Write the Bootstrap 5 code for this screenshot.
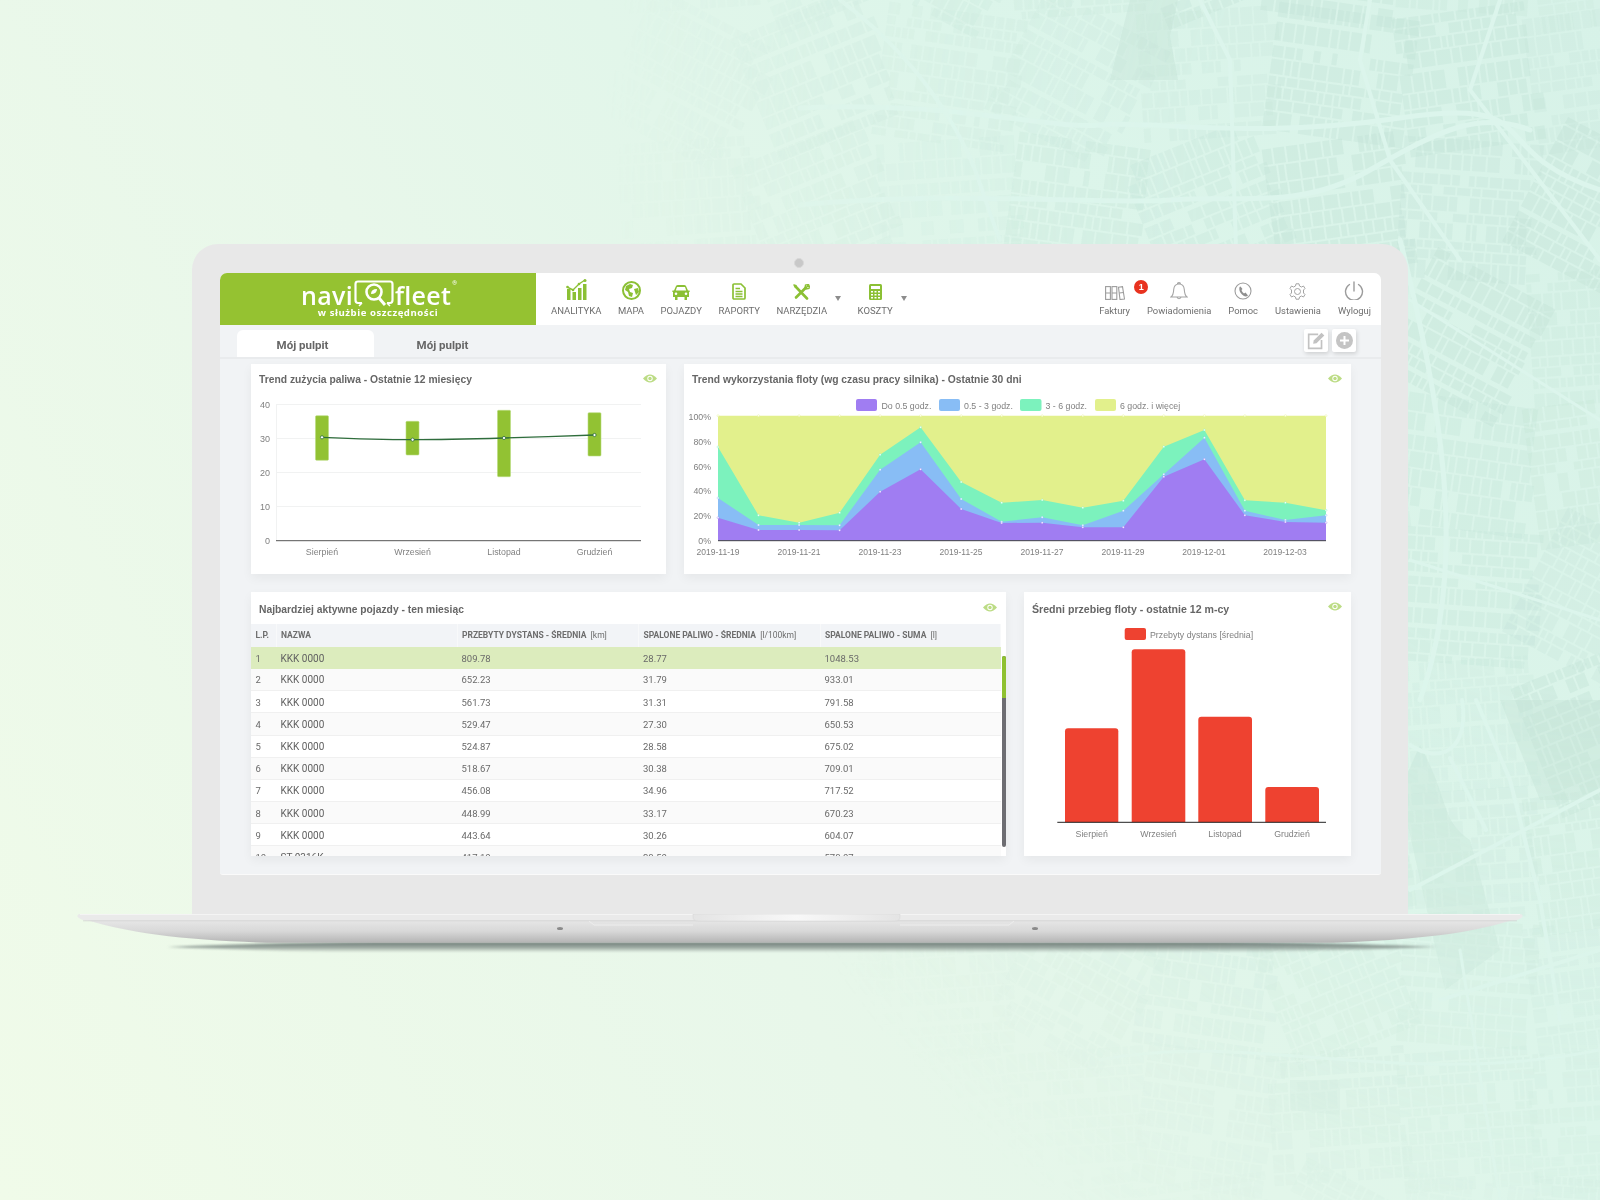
<!DOCTYPE html>
<html lang="pl">
<head>
<meta charset="utf-8">
<title>Navifleet</title>
<link href="https://cdn.jsdelivr.net/npm/bootstrap@5.3.0/dist/css/bootstrap.min.css" rel="stylesheet">
<style>
html,body{margin:0;height:1200px;overflow:hidden}
body{background:linear-gradient(60deg,#f0fbe9 0%,#e8f7ea 40%,#dcf5ea 72%,#d7f2e8 100%);font-family:Roboto,"Liberation Sans",sans-serif;color:#666;position:relative}
.map-bg{position:absolute;inset:0;width:1600px;height:1200px;-webkit-mask-image:radial-gradient(ellipse 1000px 1200px at 1600px 200px,#000 40%,rgba(0,0,0,.5) 75%,transparent 100%);mask-image:radial-gradient(ellipse 1000px 1200px at 1600px 200px,#000 40%,rgba(0,0,0,.5) 75%,transparent 100%)}
.stage{position:relative;padding-top:244px;filter:blur(.4px)}
.lid{margin-left:192px;width:1216px;height:670px;background:#e8e8e8;border-radius:26px 26px 0 0;padding:28.5px 27px 0 28px;position:relative}
.cam{position:absolute;left:602px;top:14px;width:10px;height:10px;border-radius:50%;background:#c8c8c8;border:1px solid #d8d8d8}
.scr{height:602px;background:#f1f3f5;border-radius:7px 7px 3px 3px;overflow:hidden;border-bottom:1px solid #fafafa}
.topb{height:52px;background:#fff}
.logo{width:316px;background:#95c231;color:#fff;flex:none;position:relative}
.logo-main{height:34px;padding-top:8px;gap:1px;padding-left:2px}
.logo-word{font:600 25px/22px "Open Sans",sans-serif;letter-spacing:.3px;height:22px;margin-top:3px}
.logo-r{font-size:6px;line-height:6px;align-self:flex-start;margin-top:-1px}
.logo-sub{font:700 9.6px/11px "Open Sans",sans-serif;letter-spacing:.55px}
.navs{gap:16.5px;padding-left:15px}
.navr{gap:17px;padding-right:10px}
.nitem{display:flex;flex-direction:column;align-items:center;font-size:9.5px;line-height:12px;color:#6e6e6e;white-space:nowrap;position:relative}
.navr .nitem{font-size:9.4px}
.ico{height:32px;display:flex;align-items:flex-end;justify-content:center;padding-bottom:5px}
.caret-d{width:0;height:0;border-left:3.5px solid transparent;border-right:3.5px solid transparent;border-top:5px solid #8d8d8d;margin:23px 0 0 -8.500px}
.bdg{position:absolute;left:35px;top:7px;width:14px;height:14px;border-radius:50%;background:#e8321f;color:#fff;font:700 9px/14px "Liberation Sans",sans-serif;text-align:center}
.tabsb{height:34px;border-bottom:2px solid #e9ebed;padding:5px 25px 0 17px}
.tabi{width:137px;height:27px;font-weight:700;font-size:11.5px;line-height:31px;text-align:center;color:#666;border-radius:6px 6px 0 0}
.tabi-on{background:#fff;padding-right:6px}
.tool{width:24px;height:23px;background:#fff;box-shadow:1px 2px 4px rgba(0,0,0,.14);border-radius:2px}
.tools{gap:4px;margin-top:-1px}
.dash{padding:5px 30px 0 31px;gap:18px}
.dcard{box-shadow:0 4px 10px rgba(0,0,0,.05);background:#fff;border:0;border-radius:0;overflow:hidden;position:relative}
.c1{width:415px;height:210px}
.c2{flex:1;height:210px}
.c3{width:755px;height:264px}
.c4{flex:1;height:264px}
.rowg{gap:18px}
.chead{height:30px;padding:0 9px 0 8px;flex:none}
.chead-t{height:32px}
.ctitle{font:700 10.3px/28px "Liberation Sans",sans-serif;color:#666;margin:0;padding-top:3px}
.chead-t .ctitle{padding-top:4px}
.c4 .ctitle{font-size:10.6px;padding-top:4px}
.eye{margin-top:-1px}
svg text{font-family:"Liberation Sans",sans-serif;fill:#808080}
.chart{display:block}
.twrap{height:232px;overflow:hidden;position:relative}
.tb{width:750px;margin:0;table-layout:fixed;font-size:9.5px;color:#6a6a6a;--bs-table-bg:transparent;--bs-table-striped-bg:transparent;--bs-table-color:#6a6a6a;--bs-table-striped-color:#6a6a6a}
.tb th{height:23px;background:#f2f4f7;font-size:8.5px;font-weight:700;padding:0 0 0 4.5px;border:0;border-right:1px solid #f8f9fa;vertical-align:middle;color:#6d6d6d;white-space:nowrap}
.tb th span{font-weight:400;margin-left:2px}
.tb td{height:22.15px;padding:2px 0 0 4.5px;border-bottom:1px solid #f0f0f0;vertical-align:middle;line-height:12px}
.tb tbody tr:nth-of-type(even) td{background:#fafafa}
.tb td.nm{font-size:10px;color:#606060}
.tb tr.hl td{background:#dcecbd;border-bottom:0}
.scb{position:absolute;right:0;top:32px;width:4.5px;height:191px;background:#6d6d72;border-radius:3px;overflow:hidden}
.scb-on{height:42px;background:#8fc130}
.baseb{margin-left:77px}
</style>
</head>
<body>
<svg class="map-bg" id="mapbg" viewBox="0 0 1600 1200" aria-hidden="true"></svg>
<div class="stage">
  <div class="lid">
    <div class="cam"></div>
    <div class="scr">
      <div class="topb d-flex">
        <div class="logo d-flex flex-column align-items-center">
          <div class="logo-main d-flex align-items-center">
            <span class="logo-word">navi</span>
            <svg width="40" height="27" viewBox="0 0 40 27" fill="none" stroke="#fff"><path d="M8 23H4Q1.5 23 1.5 20V4Q1.5 1.5 4 1.5H36Q38.500 1.500 38.500 4V20Q38.500 23 36 23H33" stroke-width="2.200"/><path d="M8 23 5 26M33 23 36 26" stroke-width="1.500"/><circle cx="20" cy="12" r="7.500" stroke-width="2.600"/><path d="M25 18 31 25" stroke-width="3"/><path d="M17 14Q17 9 23 9Q23 14 17 14Z" fill="#fff" stroke="none"/></svg>
            <span class="logo-word">fleet</span>
            <span class="logo-r">®</span>
          </div>
          <div class="logo-sub">w służbie oszczędności</div>
        </div>
        <div class="navs d-flex">
          <div class="nitem"><div class="ico"><svg width="21" height="21" viewBox="0 0 21 21" fill="#8bc034"><path d="M1 10h3.500v11H1zM6.500 13H10v8H6.500zM12 9h3.500v12H12zM17 5h3.500v16H17z"/><path d="M1 8 7 11 13 5 19 1" fill="none" stroke="#8bc034" stroke-width="1.400"/><circle cx="19" cy="1.500" r="1.500"/><circle cx="1.500" cy="8" r="1.300"/><circle cx="7" cy="11" r="1.300"/><circle cx="13" cy="5" r="1.300"/></svg></div>ANALITYKA</div>
          <div class="nitem"><div class="ico"><svg width="19" height="19" viewBox="0 0 19 19"><circle cx="9.500" cy="9.500" r="8.500" fill="#fff" stroke="#8bc034" stroke-width="2"/><path d="M4 5 8 3 11 4 10 7 7 8 8 11 11 12 10 16 7 15 6 11 3 9ZM12 8 16 7 17 11 14 14 13 11Z" fill="#8bc034"/></svg></div>MAPA</div>
          <div class="nitem"><div class="ico"><svg width="18" height="15" viewBox="0 0 18 15" fill="#8bc034"><path d="M4 1Q4.500 0 6 0H12Q13.500 0 14 1L16 5.500H17.500Q18 6 17.500 7H17V12H15V15H12.500V12H5.500V15H3V12H1V7H.5Q0 6 .5 5.500H2ZM5 2 3.800 5.500H14.200L13 2Z" fill-rule="evenodd"/><circle cx="4" cy="8.700" r="1.300" fill="#fff"/><circle cx="14" cy="8.700" r="1.300" fill="#fff"/></svg></div>POJAZDY</div>
          <div class="nitem"><div class="ico"><svg width="14" height="17" viewBox="0 0 14 17" fill="none" stroke="#8bc034"><path d="M1 2Q1 1 2 1H9L13 5V15Q13 16 12 16H2Q1 16 1 15Z" stroke-width="1.700"/><path d="M3.500 5.500H8M3.500 8.500H10.500M3.500 11H10.500M3.500 13.500H10.500" stroke-width="1.300"/></svg></div>RAPORTY</div>
          <div class="nitem"><div class="ico"><svg width="17" height="16" viewBox="0 0 17 16" fill="none" stroke="#8bc034" stroke-linecap="round"><path d="M3 3 14 14.500" stroke-width="2.600"/><path d="M13 3.500 3 13.500" stroke-width="2.600"/><path d="M1 1 3 1.500 3.500 3.500M1 1 2 3M12 4 12.500 1 15.500 .5 14.500 2.500 16.500 2 16 4.500 13 5Z" stroke-width="1.400"/></svg></div>NARZĘDZIA</div>
          <span class="caret-d"></span>
          <div class="nitem"><div class="ico"><svg width="13" height="16" viewBox="0 0 13 16"><rect width="13" height="16" rx="1.500" fill="#8bc034"/><rect x="2" y="2" width="9" height="3" fill="#fff"/><path d="M2 7h2v1.500H2zM5.500 7h2v1.500h-2zM9 7h2v1.500H9zM2 10h2v1.500H2zM5.500 10h2v1.500h-2zM9 10h2v1.500H9zM2 13h2v1.500H2zM5.500 13h2v1.500h-2zM9 13h2v1.500H9z" fill="#fff"/></svg></div>KOSZTY</div>
          <span class="caret-d"></span>
        </div>
        <div class="navr d-flex ms-auto">
          <div class="nitem"><div class="ico"><svg width="20" height="14" viewBox="0 0 20 14" fill="none" stroke="#9c9c9c" stroke-width="1.100"><rect x=".6" y=".6" width="4.800" height="12.800"/><rect x="7" y=".6" width="4.800" height="12.800"/><path d="M13.500 1.200 17.500 .6 19.500 13 15 13.500Z"/><path d="M.6 7H5.400M7 7H11.800M14.300 7 18.500 6.500"/></svg></div>Faktury<span class="bdg">1</span></div>
          <div class="nitem"><div class="ico"><svg width="18" height="18" viewBox="0 0 18 18" fill="none" stroke="#a4a4a4" stroke-width="1.100"><path d="M1 15H17C14.500 13 14.500 11 14.300 7.500 14 4 12 2 9 2S4 4 3.700 7.500C3.500 11 3.500 13 1 15ZM7.500 2Q7.500 .6 9 .6T10.500 2M7 15.500Q9 18 11 15.500"/></svg></div>Powiadomienia</div>
          <div class="nitem"><div class="ico"><svg width="18" height="18" viewBox="0 0 18 18" fill="none"><circle cx="9" cy="9" r="8" stroke="#9c9c9c" stroke-width="1.100"/><path d="M5.500 5Q4.500 9 8 12.500T14 13.500L11.500 10.500 10 11.500Q8 10 7.500 8L8.500 7 6.500 4.500Z" fill="#8f8f8f"/></svg></div>Pomoc</div>
          <div class="nitem"><div class="ico"><svg width="17" height="17" viewBox="0 0 17 17" fill="none" stroke="#a4a4a4" stroke-width="1"><path d="M7 .8H10L10.500 3 12.500 4 14.500 3 16 5.500 14.500 7 14.500 10 16 11.500 14.500 14 12.500 13 10.500 14 10 16.200H7L6.500 14 4.500 13 2.500 14 1 11.500 2.500 10 2.500 7 1 5.500 2.500 3 4.500 4 6.500 3Z"/><circle cx="8.500" cy="8.500" r="3"/></svg></div>Ustawienia</div>
          <div class="nitem"><div class="ico"><svg width="20" height="19" viewBox="0 0 20 19" fill="none" stroke="#9c9c9c" stroke-width="1.400" stroke-linecap="round"><path d="M10 1V10M5.500 3.500A8.500 8.500 0 1 0 14.500 3.500"/></svg></div>Wyloguj</div>
        </div>
      </div>
      <div class="tabsb d-flex">
        <div class="tabi tabi-on">Mój pulpit</div>
        <div class="tabi">Mój pulpit</div>
        <div class="tools d-flex ms-auto">
          <div class="tool d-flex align-items-center justify-content-center"><svg width="19" height="19" viewBox="0 0 17 17" fill="none" stroke="#c2c2c2" stroke-width="1.500"><path d="M13 8V15.500H1.500V3H10"/><path d="M5.500 11.500 6 8.500 13 1.500 15.500 4 8.500 11Z" fill="#c2c2c2" stroke="none"/></svg></div>
          <div class="tool d-flex align-items-center justify-content-center"><svg width="17" height="17" viewBox="0 0 17 17"><circle cx="8.500" cy="8.500" r="8.500" fill="#c4c4c4"/><path d="M8.500 4V13M4 8.500H13" stroke="#fff" stroke-width="2"/></svg></div>
        </div>
      </div>
      <div class="dash d-flex flex-column">
        <div class="d-flex rowg">
          <div class="card dcard c1">
            <div class="chead d-flex justify-content-between align-items-center">
              <h6 class="ctitle">Trend zużycia paliwa - Ostatnie 12 miesięcy</h6>
              <svg width="14" height="9" viewBox="0 0 14 9" class="eye"><path d="M0 4.500Q7-3.500 14 4.500 7 12.500 0 4.500Z" fill="#bcdc85"/><circle cx="7" cy="4.500" r="2.700" fill="#fff"/><circle cx="7" cy="4.500" r="1.700" fill="#bcdc85"/></svg>
            </div>
            <svg class="chart" width="415" height="180" viewBox="251 394 415 180">
              <g stroke="#f1f2f2" stroke-width="1"><path d="M276 404.500H641M276 438.500H641M276 472.500H641M276 506.500H641M276.500 404V541"/></g>
              <path d="M276 540.700H641" stroke="#555" stroke-width="1"/>
              <g text-anchor="end" font-size="9"><text x="270" y="407.500">40</text><text x="270" y="441.500">30</text><text x="270" y="475.500">20</text><text x="270" y="509.500">10</text><text x="270" y="544">0</text></g>
              <g fill="#92c233" stroke="#b9dc80" stroke-width=".6"><rect x="315.500" y="415.700" width="13" height="44.600" rx="1"/><rect x="406" y="421.300" width="13" height="33.700" rx="1"/><rect x="497.500" y="410.300" width="13" height="66.400" rx="1"/><rect x="588" y="412.700" width="13" height="43.300" rx="1"/></g>
              <path d="M322 437.300C360 439 380 439.700 412.600 439.700S470 439 504 438 560 436 594.500 435" fill="none" stroke="#2f6d3c" stroke-width="1.300"/>
              <g fill="#fff" stroke="#2f6d3c" stroke-width=".8"><circle cx="322" cy="437.300" r="1.600"/><circle cx="412.600" cy="439.700" r="1.600"/><circle cx="504" cy="438" r="1.600"/><circle cx="594.500" cy="435" r="1.600"/></g>
              <g text-anchor="middle" font-size="8.800"><text x="322" y="555">Sierpień</text><text x="412.600" y="555">Wrzesień</text><text x="504" y="555">Listopad</text><text x="594.500" y="555">Grudzień</text></g>
            </svg>
          </div>
          <div class="card dcard c2">
            <div class="chead d-flex justify-content-between align-items-center">
              <h6 class="ctitle">Trend wykorzystania floty (wg czasu pracy silnika) - Ostatnie 30 dni</h6>
              <svg width="14" height="9" viewBox="0 0 14 9" class="eye"><path d="M0 4.500Q7-3.500 14 4.500 7 12.500 0 4.500Z" fill="#bcdc85"/><circle cx="7" cy="4.500" r="2.700" fill="#fff"/><circle cx="7" cy="4.500" r="1.700" fill="#bcdc85"/></svg>
            </div>
            <svg class="chart" id="area" width="667" height="180" viewBox="684 394 667 180">
              <g><rect x="856" y="399" width="21" height="12" rx="2" fill="#a07df2"/><rect x="939" y="399" width="21" height="12" rx="2" fill="#88bdf5"/><rect x="1020" y="399" width="21.500" height="12" rx="2" fill="#7cf2bd"/><rect x="1095" y="399" width="21" height="12" rx="2" fill="#e2f08c"/></g>
              <g font-size="8.800"><text x="881.500" y="409">Do 0.5 godz.</text><text x="964" y="409">0.5 - 3 godz.</text><text x="1045.500" y="409">3 - 6 godz.</text><text x="1120" y="409">6 godz. i więcej</text></g>
              <g id="areaG"></g>
              <path d="M718 540.700H1326" stroke="#444" stroke-width="1"/>
              <g text-anchor="end" font-size="8.800"><text x="711" y="420">100%</text><text x="711" y="445">80%</text><text x="711" y="469.700">60%</text><text x="711" y="494.300">40%</text><text x="711" y="519">20%</text><text x="711" y="544">0%</text></g>
              <g text-anchor="middle" font-size="8.500"><text x="718" y="555">2019-11-19</text><text x="799" y="555">2019-11-21</text><text x="880" y="555">2019-11-23</text><text x="961" y="555">2019-11-25</text><text x="1042" y="555">2019-11-27</text><text x="1123" y="555">2019-11-29</text><text x="1204" y="555">2019-12-01</text><text x="1285" y="555">2019-12-03</text></g>
            </svg>
          </div>
        </div>
        <div class="d-flex rowg">
          <div class="card dcard c3">
            <div class="chead chead-t d-flex justify-content-between align-items-center">
              <h6 class="ctitle">Najbardziej aktywne pojazdy - ten miesiąc</h6>
              <svg width="14" height="9" viewBox="0 0 14 9" class="eye"><path d="M0 4.500Q7-3.500 14 4.500 7 12.500 0 4.500Z" fill="#bcdc85"/><circle cx="7" cy="4.500" r="2.700" fill="#fff"/><circle cx="7" cy="4.500" r="1.700" fill="#bcdc85"/></svg>
            </div>
            <div class="twrap">
              <table class="table tb">
                <colgroup><col style="width:25px"><col style="width:181px"><col style="width:181.500px"><col style="width:181.500px"><col></colgroup>
                <thead><tr><th>L.P.</th><th>NAZWA</th><th>PRZEBYTY DYSTANS - ŚREDNIA <span>[km]</span></th><th>SPALONE PALIWO - ŚREDNIA <span>[l/100km]</span></th><th>SPALONE PALIWO - SUMA <span>[l]</span></th></tr></thead>
                <tbody>
                  <tr class="hl"><td>1</td><td class="nm">KKK 0000</td><td>809.78</td><td>28.77</td><td>1048.53</td></tr>
                  <tr><td>2</td><td class="nm">KKK 0000</td><td>652.23</td><td>31.79</td><td>933.01</td></tr>
                  <tr><td>3</td><td class="nm">KKK 0000</td><td>561.73</td><td>31.31</td><td>791.58</td></tr>
                  <tr><td>4</td><td class="nm">KKK 0000</td><td>529.47</td><td>27.30</td><td>650.53</td></tr>
                  <tr><td>5</td><td class="nm">KKK 0000</td><td>524.87</td><td>28.58</td><td>675.02</td></tr>
                  <tr><td>6</td><td class="nm">KKK 0000</td><td>518.67</td><td>30.38</td><td>709.01</td></tr>
                  <tr><td>7</td><td class="nm">KKK 0000</td><td>456.08</td><td>34.96</td><td>717.52</td></tr>
                  <tr><td>8</td><td class="nm">KKK 0000</td><td>448.99</td><td>33.17</td><td>670.23</td></tr>
                  <tr><td>9</td><td class="nm">KKK 0000</td><td>443.64</td><td>30.26</td><td>604.07</td></tr>
                  <tr><td>10</td><td class="nm">ST 0316K</td><td>417.10</td><td>28.50</td><td>578.07</td></tr>
                </tbody>
              </table>
              <div class="scb"><div class="scb-on"></div></div>
            </div>
          </div>
          <div class="card dcard c4">
            <div class="chead d-flex justify-content-between align-items-center">
              <h6 class="ctitle">Średni przebieg floty - ostatnie 12 m-cy</h6>
              <svg width="14" height="9" viewBox="0 0 14 9" class="eye"><path d="M0 4.500Q7-3.500 14 4.500 7 12.500 0 4.500Z" fill="#bcdc85"/><circle cx="7" cy="4.500" r="2.700" fill="#fff"/><circle cx="7" cy="4.500" r="1.700" fill="#bcdc85"/></svg>
            </div>
            <svg class="chart" width="327" height="234" viewBox="1024 622 327 234">
              <rect x="1124.700" y="628" width="21.300" height="12" rx="2" fill="#ee4230"/>
              <text x="1150" y="638" font-size="8.800">Przebyty dystans [średnia]</text>
              <g fill="#ee4230"><path d="M1065 822.300V731.300Q1065 728.300 1068 728.300H1115.300Q1118.300 728.300 1118.300 731.300V822.300Z"/><path d="M1131.700 822.300V652.300Q1131.700 649.300 1134.700 649.300H1182.300Q1185.300 649.300 1185.300 652.300V822.300Z"/><path d="M1198.300 822.300V719.700Q1198.300 716.700 1201.300 716.700H1249Q1252 716.700 1252 719.700V822.300Z"/><path d="M1265.300 822.300V790Q1265.300 787 1268.300 787H1316Q1319 787 1319 790V822.300Z"/></g>
              <path d="M1057.300 822.300H1326" stroke="#222" stroke-width="1"/>
              <g text-anchor="middle" font-size="8.800"><text x="1091.700" y="837">Sierpień</text><text x="1158.500" y="837">Wrzesień</text><text x="1225" y="837">Listopad</text><text x="1292" y="837">Grudzień</text></g>
            </svg>
          </div>
        </div>
      </div>
    </div>
  </div>
  <svg class="d-block baseb" width="1446" height="42" viewBox="0 0 1446 42">
    <defs>
      <linearGradient id="gb" x1="0" y1="0" x2="0" y2="1"><stop offset="0" stop-color="#ebebeb"/><stop offset=".55" stop-color="#d8d8d8"/><stop offset="1" stop-color="#b4b4b4"/></linearGradient>
      <linearGradient id="gs" x1="0" y1="0" x2="0" y2="1"><stop offset="0" stop-color="#6f7d78"/><stop offset=".5" stop-color="#7f8c87" stop-opacity=".75"/><stop offset="1" stop-color="#7f8c87" stop-opacity="0"/></linearGradient>
      <linearGradient id="gn" x1="0" y1="0" x2="1" y2="0"><stop offset="0" stop-color="#e4e4e4"/><stop offset=".5" stop-color="#f8f8f8"/><stop offset="1" stop-color="#e4e4e4"/></linearGradient>
      <filter id="sb" x="-2%" y="-60%" width="104%" height="220%"><feGaussianBlur stdDeviation="1"/></filter>
    </defs>
    <path d="M90 33Q170 29 300 28H1146Q1280 29 1360 33 1200 39 1100 38.500H340Q240 39 90 33Z" fill="url(#gs)" filter="url(#sb)"/>
    <path d="M1 3C50 20 110 26 190 28.700H1256C1336 26 1396 20 1445 3Z" fill="url(#gb)"/>
    <path d="M3 0H1443Q1446 0 1445.500 2.500 1444 5 1438 6.500H8Q2 5 .5 2.500 0 0 3 0Z" fill="#eaeaea"/>
    <path d="M3 .5H1443" stroke="#f4f4f4" stroke-width="1"/>
    <path d="M6 6.800H1440" stroke="#cfcfcf" stroke-width=".7"/>
    <path d="M616 0H823V3Q823 7 818 7H621Q616 7 616 3Z" fill="url(#gn)" stroke="#d4d4d4" stroke-width=".5"/>
    <path d="M512 7 517 11H616M823 11H932L937 7" fill="none" stroke="#ededed" stroke-width="1"/>
    <ellipse cx="483" cy="14.500" rx="3" ry="1.500" fill="#8a8a8a"/><ellipse cx="958" cy="14.500" rx="3" ry="1.500" fill="#8a8a8a"/>
  </svg>
</div>
<script src="https://cdn.jsdelivr.net/npm/bootstrap@5.3.0/dist/js/bootstrap.bundle.min.js"></script>
<script>
(function(){
  var z=[[833,870,870,871,755,688,807,849,848,862,862,710,658,826,846,848],
         [774,855,855,856,689,607,777,845,832,856,812,703,593,812,840,826],
         [621,826,848,818,644,562,726,788,780,803,782,620,570,781,788,811],
         [527,527,527,527,527,527,527,527,527,527,527,527,527,527,527,527]];
  var col=['#a07df2','#88bdf5','#7cf2bd','#e2f08c'];
  var X=function(i){return 718+i*40.53},Y=function(v){return 240+v/3};
  var h='';
  for(var s=3;s>=0;s--){
    var d='M718 540.7';
    z[s].forEach(function(v,i){d+='L'+X(i).toFixed(1)+' '+Y(v).toFixed(1)});
    d+='L1326 540.7Z';
    h+='<path d="'+d+'" fill="'+col[s]+'"/>';
  }
  for(s=3;s>=0;s--){z[s].forEach(function(v,i){h+='<circle cx="'+X(i).toFixed(1)+'" cy="'+Y(v).toFixed(1)+'" r="1" fill="#fff" stroke="'+col[s]+'" stroke-width=".4"/>'})}
  document.getElementById('areaG').innerHTML=h;
  var seed=7;function R(){seed=(seed*16807)%2147483647;return seed/2147483647}
  var m='';
  for(var ty=-120;ty<1300;ty+=130){for(var tx=620;tx<1720;tx+=130){
    var a=[-4,4,8,-8,28,-22][Math.floor(R()*6)];
    var b='',y=0;
    while(y<130){
      var bh=7+R()*12,x=0;
      while(x<130){
        var bw=4+R()*11;
        if(R()>.1){b+='M'+x.toFixed(1)+' '+y.toFixed(1)+'h'+bw.toFixed(1)+'v'+bh.toFixed(1)+'h-'+bw.toFixed(1)+'z'}
        x+=bw+2;
      }
      y+=bh+(R()<.2?5:2);
    }
    m+='<path transform="translate('+tx+' '+ty+') rotate('+a+' 65 65)" d="'+b+'" fill="#bfe0d3" opacity="'+(.15+R()*.2).toFixed(2)+'"/>';
  }}
  m+='<path d="M1130 0H1178L1170 36 1178 80H1110ZM1420 745C1450 800 1440 820 1470 840L1500 950 1445 990 1420 880 1400 790ZM1500 700H1600V800L1540 800ZM1290 1080 1340 1080 1340 1115 1290 1110Z" fill="#bfe0d3" opacity=".38"/>';
  m+='<g fill="none" stroke="#dcf5ec" stroke-linecap="round"><path stroke-width="5" d="M800 108C950 100 1050 130 1100 125S1250 140 1400 118 1480 150 1600 190"/><path stroke-width="5" d="M800 205C950 190 1100 205 1170 200S1300 210 1370 170 1480 110 1530 130"/><path stroke-width="4" d="M840 0C880 30 920 70 950 120S980 190 1000 240"/><path stroke-width="4" d="M1200 0 1230 60 1236 250M1370 0 1360 60 1390 160 1460 260M1500 0 1470 90 1600 260"/><path stroke-width="4" d="M1410 745C1440 765 1470 750 1462 700M1450 758 1486 830M1476 700 1510 780 1540 900 1560 1020M1410 890 1600 790M1440 1000 1600 950"/><path stroke-width="5" d="M1400 240C1440 400 1470 560 1420 700"/><path stroke-width="3" d="M1410 300 1600 420M1410 560 1600 620M1460 950 1500 1200M1100 1060C1250 1030 1400 1090 1600 1050"/></g>';
  document.getElementById('mapbg').innerHTML=m;
})();
</script>
</body>
</html>
